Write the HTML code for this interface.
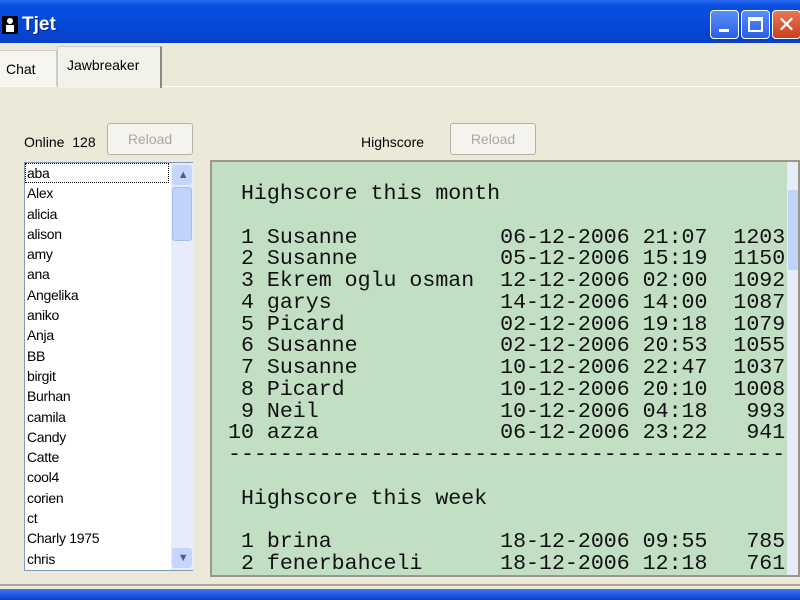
<!DOCTYPE html>
<html><head><style>
*{margin:0;padding:0;box-sizing:border-box}
body{width:800px;height:600px;overflow:hidden;background:#ece9d8;font-family:"Liberation Sans",sans-serif;position:relative}
.title{position:absolute;left:0;top:0;width:800px;height:43px;background:linear-gradient(#2a6cf0 0,#0a50e0 12%,#0448d8 60%,#0a3fc8 100%)}
.title .t{position:absolute;left:22px;top:14px;color:#fff;font-weight:bold;font-size:19px;text-shadow:1px 1px #0a1f80}
.btn{position:absolute;top:10px;width:29px;height:29px;border:1px solid #fff;border-radius:4px;background:linear-gradient(#5a8ef8,#2a5ee8)}
.tab{position:absolute;font-size:14px;background:#f6f5ef;border:1px solid #ccc}
.list{position:absolute;left:24px;top:162px;width:169px;height:409px;background:#fff;border:1px solid #7f9db9}
.list div{height:20.3px;font-size:14px;padding-left:2px;line-height:21px;letter-spacing:-0.3px}
.sb{position:absolute;background:#e7ecfa}
.green{position:absolute;left:210px;top:160px;width:590px;height:417px;background:#c2dfc4;border:2px solid #9a988a;overflow:hidden}
pre{position:absolute;left:16px;top:22px;font-family:"Liberation Mono",monospace;font-size:21.6px;line-height:21.75px;color:#111}
.rl{position:absolute;width:86px;height:32px;border:1px solid #b4b2a6;border-radius:3px;background:#f4f3ee;color:#aca899;font-size:14px;text-align:center;line-height:30px}
</style></head><body>
<div class="title"><svg style="position:absolute;left:2px;top:16px" width="16" height="18"><rect width="16" height="18" fill="#000"/><circle cx="8" cy="5" r="3" fill="#fff"/><rect x="4" y="9" width="8" height="7" fill="#fff"/></svg><div class="t">Tjet</div>
<div class="btn" style="left:710px"><div style="position:absolute;left:8px;top:18px;width:10px;height:3px;background:#fff"></div></div>
<div class="btn" style="left:741px"><div style="position:absolute;left:6px;top:6px;width:15px;height:15px;border:2px solid #fff;border-top-width:4px"></div></div>
<div class="btn" style="left:772px;background:linear-gradient(#e8775a,#c8401a);color:#fff;font-size:22px;text-align:center;line-height:27px">✕</div>
</div>
<div class="tab" style="left:0;top:50px;width:57px;height:37px;border-left:none;padding:10px 0 0 6px">Chat</div>
<div class="tab" style="left:57px;top:46px;width:105px;height:42px;border-right:2px solid #888;border-bottom:none;padding:10px 0 0 9px;background:#f2f1ea">Jawbreaker</div>
<div style="position:absolute;left:0;top:86px;width:57px;height:1px;background:#fff"></div>
<div style="position:absolute;left:162px;top:86px;width:638px;height:1px;background:#fff"></div>
<div style="position:absolute;left:24px;top:134px;font-size:14px">Online&nbsp; 128</div>
<div class="rl" style="left:107px;top:123px">Reload</div>
<div style="position:absolute;left:361px;top:134px;font-size:14px">Highscore</div>
<div class="rl" style="left:450px;top:123px">Reload</div>
<div class="list">
<div style="outline:1px dotted #000;outline-offset:-1px;width:144px">aba</div><div>Alex</div><div>alicia</div><div>alison</div><div>amy</div><div>ana</div><div>Angelika</div><div>aniko</div><div>Anja</div><div>BB</div><div>birgit</div><div>Burhan</div><div>camila</div><div>Candy</div><div>Catte</div><div>cool4</div><div>corien</div><div>ct</div><div>Charly 1975</div><div>chris</div>
<div class="sb" style="left:146px;top:0;width:22px;height:407px"></div>
<div class="sb" style="left:147px;top:2px;width:20px;height:20px;background:#c5d5fb;border-radius:3px;text-align:center;font-size:11px;color:#4d6185;height:20px;line-height:20px">▲</div>
<div class="sb" style="left:147px;top:24px;width:20px;height:54px;background:#c1d3fb;border:1px solid #a8bde8;border-radius:3px"></div>
<div class="sb" style="left:147px;top:385px;width:20px;height:20px;background:#c5d5fb;border-radius:3px;text-align:center;font-size:11px;color:#4d6185;line-height:20px">▼</div>
</div>
<div class="green">
<pre> Highscore this month

 1 Susanne           06-12-2006 21:07  1203
 2 Susanne           05-12-2006 15:19  1150
 3 Ekrem oglu osman  12-12-2006 02:00  1092
 4 garys             14-12-2006 14:00  1087
 5 Picard            02-12-2006 19:18  1079
 6 Susanne           02-12-2006 20:53  1055
 7 Susanne           10-12-2006 22:47  1037
 8 Picard            10-12-2006 20:10  1008
 9 Neil              10-12-2006 04:18   993
10 azza              06-12-2006 23:22   941
-----------------------------------------------

 Highscore this week

 1 brina             18-12-2006 09:55   785
 2 fenerbahceli      18-12-2006 12:18   761</pre>
<div class="sb" style="left:575px;top:0;width:15px;height:415px"></div>
<div class="sb" style="left:576px;top:28px;width:13px;height:80px;background:#c1d3fb;border-radius:2px"></div>
</div>
<div style="position:absolute;left:0;top:584px;width:800px;height:2px;background:#aca899"></div>
<div style="position:absolute;left:0;top:589px;width:800px;height:11px;background:linear-gradient(#3a7af5,#0a3fc8)"></div>
</body></html>
